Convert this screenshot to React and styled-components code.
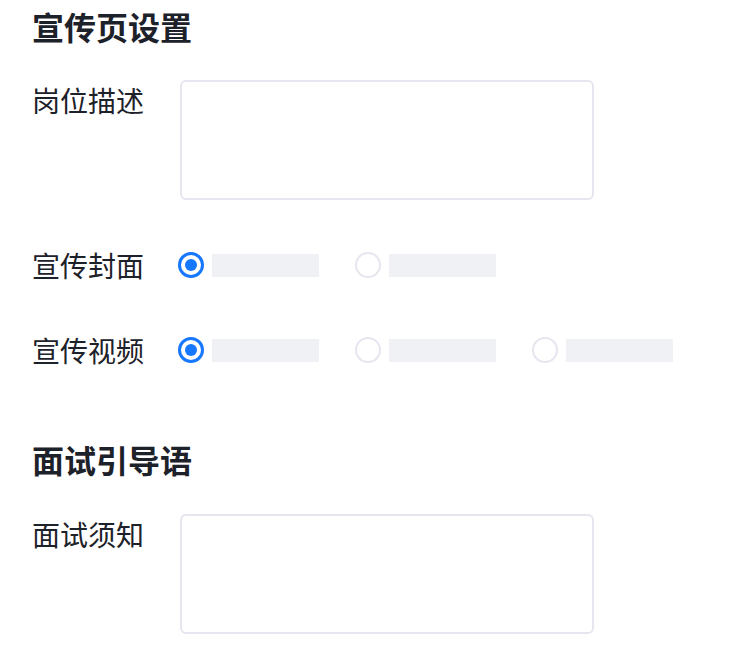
import React from "react";
import styled, { createGlobalStyle } from "styled-components";

const Global = createGlobalStyle`
  html, body { margin: 0; padding: 0; background: #fff; }
  body { font-family: "Noto Sans CJK SC", "Noto Sans", sans-serif; color: #1d2129; }
`;

const Page = styled.div`
  padding: 4px 32px 0 32px;
  display: flex;
  flex-direction: column;
`;

const Section = styled.section`
  & + & { padding-top: 22px; }
  & + & h2 { margin-bottom: 33px; }
`;

const Title = styled.h2`
  margin: 0 0 32px 0;
  font-size: 32px;
  line-height: 44px;
  font-weight: 600;
  color: #1d2129;
`;

const Row = styled.div`
  display: flex;
  align-items: ${(p) => (p.$center ? "center" : "flex-start")};
  margin-bottom: 45px;
`;

const Label = styled.div`
  width: 148px;
  flex: none;
  font-size: 28px;
  line-height: 40px;
  color: #1d2129;
`;

const TextArea = styled.textarea`
  box-sizing: border-box;
  width: 414px;
  height: 120px;
  border: 2px solid #e5e6ef;
  border-radius: 6px;
  resize: none;
  outline: none;
  background: #fff;
  margin: 0;
`;

const RadioGroup = styled.div`
  display: flex;
  align-items: center;
  gap: 36px;
  height: 40px;
  margin-left: -2px;
`;

const RadioItem = styled.label`
  display: flex;
  align-items: center;
  gap: 8px;
`;

const RadioCircle = styled.span`
  box-sizing: border-box;
  width: 26px;
  height: 26px;
  border-radius: 50%;
  border: ${(p) => (p.$checked ? "3px solid #1677ff" : "2px solid #e5e6ef")};
  display: flex;
  align-items: center;
  justify-content: center;
  background: #fff;
  &::after {
    content: "";
    display: ${(p) => (p.$checked ? "block" : "none")};
    width: 12px;
    height: 12px;
    border-radius: 50%;
    background: #1677ff;
  }
`;

const Placeholder = styled.span`
  display: block;
  width: 107px;
  height: 23px;
  background: #f0f1f5;
`;

const Radios = ({ count }) => (
  <RadioGroup>
    {Array.from({ length: count }).map((_, i) => (
      <RadioItem key={i}>
        <RadioCircle $checked={i === 0} />
        <Placeholder />
      </RadioItem>
    ))}
  </RadioGroup>
);

export default function App() {
  return (
    <Page>
      <Global />
      <Section>
        <Title>宣传页设置</Title>
        <Row>
          <Label>岗位描述</Label>
          <TextArea />
        </Row>
        <Row $center>
          <Label>宣传封面</Label>
          <Radios count={2} />
        </Row>
        <Row $center>
          <Label>宣传视频</Label>
          <Radios count={3} />
        </Row>
      </Section>
      <Section>
        <Title>面试引导语</Title>
        <Row>
          <Label>面试须知</Label>
          <TextArea />
        </Row>
      </Section>
    </Page>
  );
}
